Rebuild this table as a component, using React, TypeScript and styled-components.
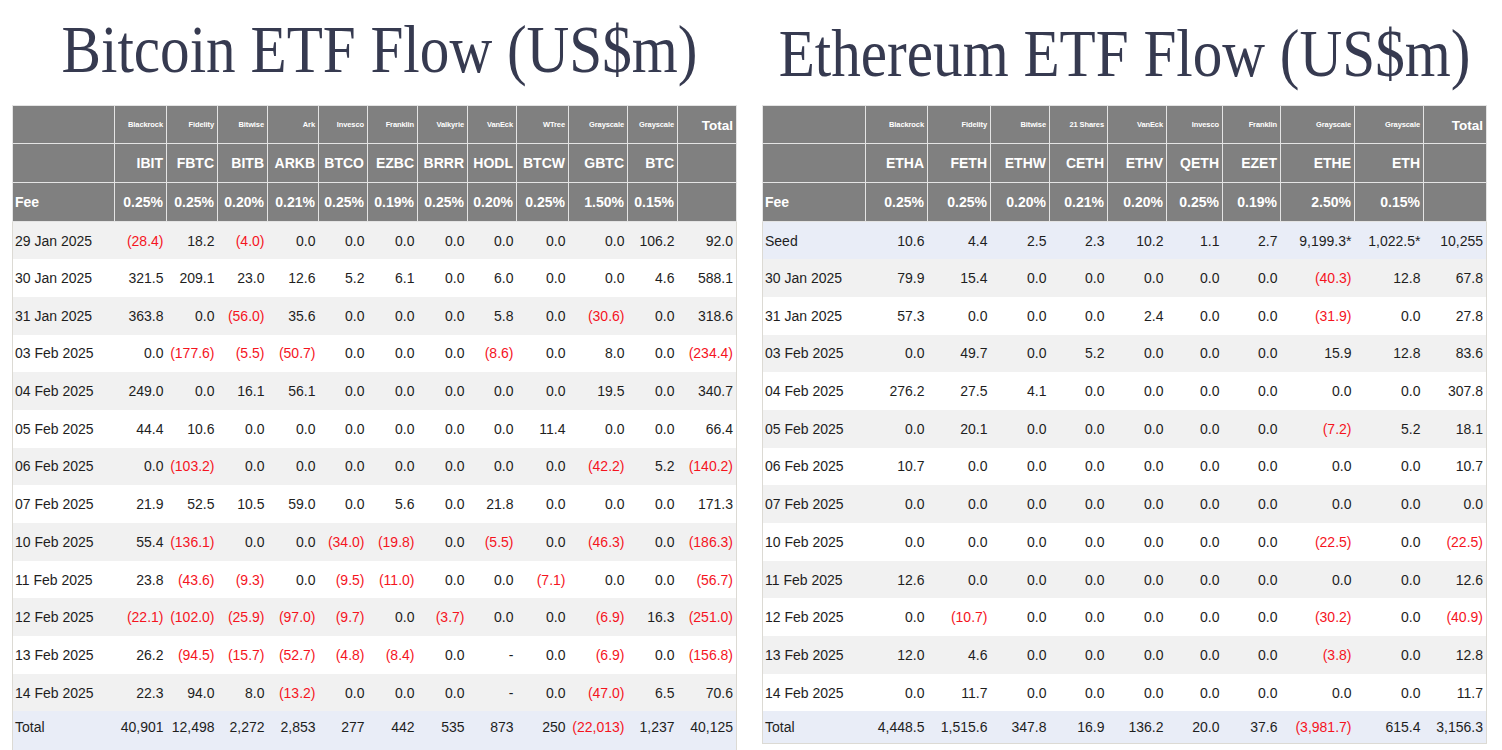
import {FC} from 'react';
import styled, {createGlobalStyle} from 'styled-components';

type Fund = { issuer: string, ticker: string, fee: string };
type Row = { label: string, values: string[], total: string, kind?: 'seed' | 'total' };

const btcFunds: Fund[] = [
    {issuer: 'Blackrock', ticker: 'IBIT', fee: '0.25%'},
    {issuer: 'Fidelity', ticker: 'FBTC', fee: '0.25%'},
    {issuer: 'Bitwise', ticker: 'BITB', fee: '0.20%'},
    {issuer: 'Ark', ticker: 'ARKB', fee: '0.21%'},
    {issuer: 'Invesco', ticker: 'BTCO', fee: '0.25%'},
    {issuer: 'Franklin', ticker: 'EZBC', fee: '0.19%'},
    {issuer: 'Valkyrie', ticker: 'BRRR', fee: '0.25%'},
    {issuer: 'VanEck', ticker: 'HODL', fee: '0.20%'},
    {issuer: 'WTree', ticker: 'BTCW', fee: '0.25%'},
    {issuer: 'Grayscale', ticker: 'GBTC', fee: '1.50%'},
    {issuer: 'Grayscale', ticker: 'BTC', fee: '0.15%'},
]
const btcWidths = [102, 52, 51, 50, 51, 49, 50, 50, 49, 52, 59, 50, 59]

const btcRows: Row[] = [
    {label: '29 Jan 2025', values: ['(28.4)', '18.2', '(4.0)', '0.0', '0.0', '0.0', '0.0', '0.0', '0.0', '0.0', '106.2'], total: '92.0'},
    {label: '30 Jan 2025', values: ['321.5', '209.1', '23.0', '12.6', '5.2', '6.1', '0.0', '6.0', '0.0', '0.0', '4.6'], total: '588.1'},
    {label: '31 Jan 2025', values: ['363.8', '0.0', '(56.0)', '35.6', '0.0', '0.0', '0.0', '5.8', '0.0', '(30.6)', '0.0'], total: '318.6'},
    {label: '03 Feb 2025', values: ['0.0', '(177.6)', '(5.5)', '(50.7)', '0.0', '0.0', '0.0', '(8.6)', '0.0', '8.0', '0.0'], total: '(234.4)'},
    {label: '04 Feb 2025', values: ['249.0', '0.0', '16.1', '56.1', '0.0', '0.0', '0.0', '0.0', '0.0', '19.5', '0.0'], total: '340.7'},
    {label: '05 Feb 2025', values: ['44.4', '10.6', '0.0', '0.0', '0.0', '0.0', '0.0', '0.0', '11.4', '0.0', '0.0'], total: '66.4'},
    {label: '06 Feb 2025', values: ['0.0', '(103.2)', '0.0', '0.0', '0.0', '0.0', '0.0', '0.0', '0.0', '(42.2)', '5.2'], total: '(140.2)'},
    {label: '07 Feb 2025', values: ['21.9', '52.5', '10.5', '59.0', '0.0', '5.6', '0.0', '21.8', '0.0', '0.0', '0.0'], total: '171.3'},
    {label: '10 Feb 2025', values: ['55.4', '(136.1)', '0.0', '0.0', '(34.0)', '(19.8)', '0.0', '(5.5)', '0.0', '(46.3)', '0.0'], total: '(186.3)'},
    {label: '11 Feb 2025', values: ['23.8', '(43.6)', '(9.3)', '0.0', '(9.5)', '(11.0)', '0.0', '0.0', '(7.1)', '0.0', '0.0'], total: '(56.7)'},
    {label: '12 Feb 2025', values: ['(22.1)', '(102.0)', '(25.9)', '(97.0)', '(9.7)', '0.0', '(3.7)', '0.0', '0.0', '(6.9)', '16.3'], total: '(251.0)'},
    {label: '13 Feb 2025', values: ['26.2', '(94.5)', '(15.7)', '(52.7)', '(4.8)', '(8.4)', '0.0', '-', '0.0', '(6.9)', '0.0'], total: '(156.8)'},
    {label: '14 Feb 2025', values: ['22.3', '94.0', '8.0', '(13.2)', '0.0', '0.0', '0.0', '-', '0.0', '(47.0)', '6.5'], total: '70.6'},
    {label: 'Total', values: ['40,901', '12,498', '2,272', '2,853', '277', '442', '535', '873', '250', '(22,013)', '1,237'], total: '40,125', kind: 'total'},
]

const ethFunds: Fund[] = [
    {issuer: 'Blackrock', ticker: 'ETHA', fee: '0.25%'},
    {issuer: 'Fidelity', ticker: 'FETH', fee: '0.25%'},
    {issuer: 'Bitwise', ticker: 'ETHW', fee: '0.20%'},
    {issuer: '21 Shares', ticker: 'CETH', fee: '0.21%'},
    {issuer: 'VanEck', ticker: 'ETHV', fee: '0.20%'},
    {issuer: 'Invesco', ticker: 'QETH', fee: '0.25%'},
    {issuer: 'Franklin', ticker: 'EZET', fee: '0.19%'},
    {issuer: 'Grayscale', ticker: 'ETHE', fee: '2.50%'},
    {issuer: 'Grayscale', ticker: 'ETH', fee: '0.15%'},
]
const ethWidths = [103, 62, 63, 59, 58, 59, 56, 58, 74, 69, 63]

const ethRows: Row[] = [
    {label: 'Seed', values: ['10.6', '4.4', '2.5', '2.3', '10.2', '1.1', '2.7', '9,199.3*', '1,022.5*'], total: '10,255', kind: 'seed'},
    {label: '30 Jan 2025', values: ['79.9', '15.4', '0.0', '0.0', '0.0', '0.0', '0.0', '(40.3)', '12.8'], total: '67.8'},
    {label: '31 Jan 2025', values: ['57.3', '0.0', '0.0', '0.0', '2.4', '0.0', '0.0', '(31.9)', '0.0'], total: '27.8'},
    {label: '03 Feb 2025', values: ['0.0', '49.7', '0.0', '5.2', '0.0', '0.0', '0.0', '15.9', '12.8'], total: '83.6'},
    {label: '04 Feb 2025', values: ['276.2', '27.5', '4.1', '0.0', '0.0', '0.0', '0.0', '0.0', '0.0'], total: '307.8'},
    {label: '05 Feb 2025', values: ['0.0', '20.1', '0.0', '0.0', '0.0', '0.0', '0.0', '(7.2)', '5.2'], total: '18.1'},
    {label: '06 Feb 2025', values: ['10.7', '0.0', '0.0', '0.0', '0.0', '0.0', '0.0', '0.0', '0.0'], total: '10.7'},
    {label: '07 Feb 2025', values: ['0.0', '0.0', '0.0', '0.0', '0.0', '0.0', '0.0', '0.0', '0.0'], total: '0.0'},
    {label: '10 Feb 2025', values: ['0.0', '0.0', '0.0', '0.0', '0.0', '0.0', '0.0', '(22.5)', '0.0'], total: '(22.5)'},
    {label: '11 Feb 2025', values: ['12.6', '0.0', '0.0', '0.0', '0.0', '0.0', '0.0', '0.0', '0.0'], total: '12.6'},
    {label: '12 Feb 2025', values: ['0.0', '(10.7)', '0.0', '0.0', '0.0', '0.0', '0.0', '(30.2)', '0.0'], total: '(40.9)'},
    {label: '13 Feb 2025', values: ['12.0', '4.6', '0.0', '0.0', '0.0', '0.0', '0.0', '(3.8)', '0.0'], total: '12.8'},
    {label: '14 Feb 2025', values: ['0.0', '11.7', '0.0', '0.0', '0.0', '0.0', '0.0', '0.0', '0.0'], total: '11.7'},
    {label: 'Total', values: ['4,448.5', '1,515.6', '347.8', '16.9', '136.2', '20.0', '37.6', '(3,981.7)', '615.4'], total: '3,156.3', kind: 'total'},
]

const isNeg = (v: string) => v.startsWith('(')

const FlowTable: FC<{ funds: Fund[], rows: Row[], widths: number[], totalHeight: number }> = ({funds, rows, widths, totalHeight}) => {
    let stripe = 0
    return (
        <Table>
            <colgroup>
                {widths.map((w, idx) => <col key={idx} style={{width: w}}/>)}
            </colgroup>
            <thead>
            <HeadRow $h={38}>
                <HeadCell/>
                {funds.map((f, idx) => <IssuerCell key={idx}>{f.issuer}</IssuerCell>)}
                <TotalHead>Total</TotalHead>
            </HeadRow>
            <HeadRow $h={39}>
                <HeadCell/>
                {funds.map((f, idx) => <HeadCell key={idx}>{f.ticker}</HeadCell>)}
                <HeadCell/>
            </HeadRow>
            <HeadRow $h={39}>
                <HeadCell $left>Fee</HeadCell>
                {funds.map((f, idx) => <HeadCell key={idx}>{f.fee}</HeadCell>)}
                <HeadCell/>
            </HeadRow>
            </thead>
            <tbody>
            {rows.map((r, idx) => {
                const tone = r.kind ? 'blue' : (stripe++ % 2 === 0 ? 'gray' : 'white')
                const isTotal = r.kind === 'total'
                return (
                    <BodyRow key={idx} $tone={tone} $total={isTotal} $h={isTotal ? totalHeight : 37.7}>
                        <LabelCell>{r.label}</LabelCell>
                        {r.values.map((v, i) => <NumCell key={i} $neg={isNeg(v)}>{v}</NumCell>)}
                        <NumCell $neg={isNeg(r.total)}>{r.total}</NumCell>
                    </BodyRow>
                )
            })}
            </tbody>
        </Table>
    )
}

export const App: FC = () => {
    return (
        <Page>
            <GlobalStyle/>
            <Panel>
                <TitleBox $top={15} $shift={12}>
                    <Title>Bitcoin ETF Flow (US$m)</Title>
                </TitleBox>
                <FlowTable funds={btcFunds} rows={btcRows} widths={btcWidths} totalHeight={42}/>
            </Panel>
            <Panel>
                <TitleBox $top={19} $shift={2}>
                    <Title>Ethereum ETF Flow (US$m)</Title>
                </TitleBox>
                <FlowTable funds={ethFunds} rows={ethRows} widths={ethWidths} totalHeight={32}/>
            </Panel>
        </Page>
    );
};

const GlobalStyle = createGlobalStyle`
  html, body {
    margin: 0;
    padding: 0;
    background: #fff;
  }
  body {
    font-family: "Liberation Sans", Arial, sans-serif;
  }
`

const Page = styled.div`
  display: flex;
  gap: 26px;
  padding-left: 12px;
  width: 1502px;
  height: 750px;
  overflow: hidden;
  box-sizing: border-box;
`

const Panel = styled.div`
  display: flex;
  flex-direction: column;
  width: 724px;
  flex-shrink: 0;
`

const TitleBox = styled.div<{ $top: number, $shift: number }>`
  flex-shrink: 0;
  height: 105px;
  box-sizing: border-box;
  padding-top: ${p => p.$top}px;
  padding-left: ${p => p.$shift}px;
  display: flex;
  justify-content: center;
`

const Title = styled.h1`
  flex-shrink: 0;
  margin: 0;
  font-family: "Liberation Serif", "Times New Roman", serif;
  font-weight: 400;
  font-size: 68px;
  line-height: 68px;
  color: #363a50;
  white-space: nowrap;
  transform: scaleX(0.87);
  transform-origin: center;
`

const Table = styled.table`
  flex-shrink: 0;
  width: 724px;
  table-layout: fixed;
  border-collapse: collapse;
  border: 1px solid #dcdad4;
  font-family: "Liberation Sans", Arial, sans-serif;
`

const HeadRow = styled.tr<{ $h: number }>`
  height: ${p => p.$h}px;
  background: #808080;
`

const HeadCell = styled.th<{ $left?: boolean }>`
  border: 1px solid #e4e4e4;
  padding: 0 3px 0 2px;
  color: #fff;
  font-size: 14px;
  font-weight: 700;
  text-align: ${p => p.$left ? 'left' : 'right'};
  vertical-align: middle;
  white-space: nowrap;
  overflow: hidden;
`

const IssuerCell = styled(HeadCell)`
  font-size: 7.5px;
  letter-spacing: -0.1px;
`

const TotalHead = styled(HeadCell)`
  font-size: 13.5px;
  vertical-align: top;
  padding-top: 12px;
`

const BodyRow = styled.tr<{ $tone: 'gray' | 'white' | 'blue', $h: number, $total: boolean }>`
  height: ${p => p.$h}px;
  background: ${p => p.$tone === 'gray' ? '#f1f1f1' : p.$tone === 'blue' ? '#e9edf7' : '#fff'};

  td {
    vertical-align: ${p => p.$total ? 'top' : 'middle'};
    padding-top: ${p => p.$total ? 8 : 0}px;
  }
`

const LabelCell = styled.td`
  padding: 0 2px;
  font-size: 14px;
  color: #1e1e1e;
  text-align: left;
  white-space: nowrap;
`

const NumCell = styled.td<{ $neg: boolean }>`
  padding: 0 3px 0 0;
  font-size: 14px;
  color: ${p => p.$neg ? '#f5141e' : '#1e1e1e'};
  text-align: right;
  white-space: nowrap;
`

export default App;
